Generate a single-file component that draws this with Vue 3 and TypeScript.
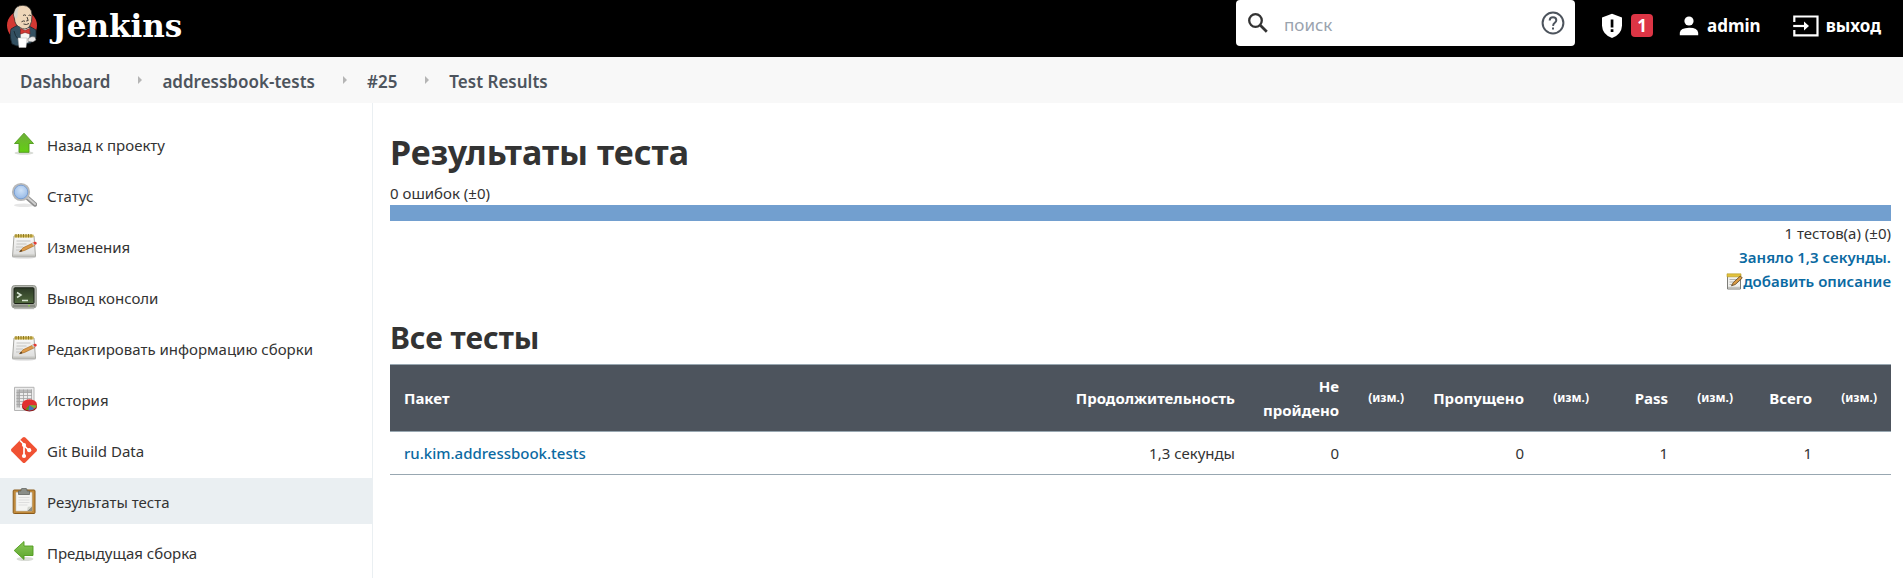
<script setup lang="ts">
type IconName = 'up' | 'search' | 'notepad' | 'terminal' | 'graph' | 'git' | 'clipboard' | 'back'

interface Task {
  icon: IconName
  label: string
  active?: boolean
}

interface PackageRow {
  name: string
  duration: string
  failed: number
  skipped: number
  passed: number
  total: number
}

const crumbs: string[] = ['Dashboard', 'addressbook-tests', '#25', 'Test Results']

const tasks: Task[] = [
  { icon: 'up', label: 'Назад к проекту' },
  { icon: 'search', label: 'Статус' },
  { icon: 'notepad', label: 'Изменения' },
  { icon: 'terminal', label: 'Вывод консоли' },
  { icon: 'notepad', label: 'Редактировать информацию сборки' },
  { icon: 'graph', label: 'История' },
  { icon: 'git', label: 'Git Build Data' },
  { icon: 'clipboard', label: 'Результаты теста', active: true },
  { icon: 'back', label: 'Предыдущая сборка' },
]

const rows: PackageRow[] = [
  { name: 'ru.kim.addressbook.tests', duration: '1,3 секунды', failed: 0, skipped: 0, passed: 1, total: 1 },
]
</script>

<template>
  <div class="page">
    <svg class="defs" width="0" height="0" aria-hidden="true">
      <defs>
        <linearGradient id="green" x1="0" y1="0" x2="0" y2="1">
          <stop offset="0" stop-color="#6fae3a" />
          <stop offset="1" stop-color="#63cf12" />
        </linearGradient>
        <linearGradient id="leaf" x1="0" y1="0" x2="0" y2="1">
          <stop offset="0" stop-color="#8cc95a" />
          <stop offset="1" stop-color="#5ba52c" />
        </linearGradient>
        <linearGradient id="paper" x1="0" y1="0" x2="0" y2="1">
          <stop offset="0" stop-color="#fafafa" />
          <stop offset="1" stop-color="#dcdcda" />
        </linearGradient>
        <linearGradient id="screen" x1="0" y1="0" x2="0" y2="1">
          <stop offset="0" stop-color="#2c3a26" />
          <stop offset="1" stop-color="#50693d" />
        </linearGradient>
        <radialGradient id="lens" cx="0.5" cy="0.4" r="0.6">
          <stop offset="0" stop-color="#cfe2f8" />
          <stop offset="1" stop-color="#8fb4e4" />
        </radialGradient>
        <symbol id="notepad" viewBox="0 0 26 26">
          <ellipse cx="13" cy="24.3" rx="12" ry="1.2" fill="#d4d4d4" />
          <path d="M3 3h20l1.500 20.500H1.500z" fill="url(#paper)" stroke="#a6a6a2" stroke-width="1" />
          <path d="M2 21.500h22v2H2z" fill="#c6c6c2" />
          <path d="M3.500 1.500h19v3h-19z" fill="#d0b751" />
          <path d="M5 1v3.500M7.500 1v3.500M10 1v3.500M12.500 1v3.500M15 1v3.500M17.500 1v3.500M20 1v3.500" stroke="#8f7a25" stroke-width="1" />
          <path d="M5.500 8h14M5.500 11h10M5 14h7M5 17h5" stroke="#c4c4c2" stroke-width="1" />
          <path d="M8.500 18.800l3.500-4L22 10l1.700 2.600-10 4.800z" fill="#dc9a4a" stroke="#a36317" stroke-width=".6" />
          <path d="M8.500 18.800l1.600-2 1.300 1.400z" fill="#3a2f20" />
          <path d="M22 9.600l1.800-.9q1.600-.2 1.900 1.200l-.1 1-1.800 1.200z" fill="#e23c35" />
          <path d="M20.800 10.300l1.300-.7 1.700 2.500-1.300.7z" fill="#c9c9c9" />
        </symbol>
        <symbol id="mini-notepad" viewBox="0 0 17 17">
          <path d="M1.500 2h13v14h-13z" fill="#f1f1ee" stroke="#7d7d78" stroke-width="1" />
          <path d="M1 .8h14v3H1z" fill="#e2c23c" stroke="#b59722" stroke-width=".6" />
          <path d="M3.500 6.500h8M3.500 9h5M3.500 11.500h3" stroke="#b5b5b2" stroke-width="1" />
          <path d="M2 14.500h12" stroke="#c2c2be" stroke-width="1.500" />
          <path d="M5.500 12.800l1.800-3.300L14.300 3l2 2-7 6.500z" fill="#d99a45" stroke="#5c4420" stroke-width=".8" />
        </symbol>
      </defs>
    </svg>

    <header class="top">
      <a class="brand" href="#">
        <svg class="butler" viewBox="0 0 32 44" aria-hidden="true">
          <circle cx="16" cy="21.500" r="15" fill="#d33833" />
          <path d="M5 25q5-3 7-4l11 1 7 4v8l-4 1-1 4-14 3-5-2q-3-7-1-15z" fill="#335061" stroke="#16232c" stroke-width=".8" />
          <path d="M14 23l10 1-1 14-8 3z" fill="#f7f6f2" />
          <path d="M8.300 8Q9 1.500 17 1.300 25.500 2 26 10.500q.3 8-2.500 12-4.500 4.500-9.500 1Q8.800 21 8.500 15 6.500 10 8.300 8z" fill="#efd6b9" stroke="#302d2a" stroke-width=".8" />
          <path d="M8.500 7.500q2-4 4.500-4.500-2 4-1.300 7 .2 3-1.400 5-3-4-1.800-7.500z" fill="#d7d4cc" />
          <path d="M17 11.500q1.500-1.300 3 0M22.500 11.500q1.500-1 2.500.2M21 13l1.200 3.500-2 .5M17.500 20q3 1.300 5.500-.5M15.500 17.800q2-1.500 3.500-.5" fill="none" stroke="#302d2a" stroke-width=".9" />
          <path d="M5 26q4-3 8-4l2 4-1 9H6q-2-4-1-9z" fill="#335061" />
          <path d="M23.500 23l5.500 3v7l-5 1z" fill="#335061" />
          <path d="M14.500 24.500l4.500 2 4.500-2 .5 5.500-5-1.500-4.500 1.500z" fill="#d33833" stroke="#7b1b19" stroke-width=".6" />
          <path d="M8 27q1 5 4 8" fill="none" stroke="#16232c" stroke-width=".8" />
          <path d="M12 34h9l-1 9.500h-7z" fill="#fff" stroke="#b7b7b7" stroke-width=".5" />
          <path d="M22 34.500q4-3 7-1.500l1 3-3 2-5-.5z" fill="#e8e8e8" stroke="#555" stroke-width=".5" />
        </svg>
        <span class="wordmark">Jenkins</span>
      </a>

      <form class="search" role="search" @submit.prevent>
        <label class="lens" for="search-box" aria-label="поиск">
          <svg viewBox="0 0 20 20" aria-hidden="true">
            <circle cx="7.500" cy="7.500" r="6.300" fill="none" stroke="#333" stroke-width="2.300" />
            <path d="M12.300 12.300l6.500 6.500" stroke="#333" stroke-width="2.700" />
          </svg>
        </label>
        <input id="search-box" type="text" placeholder="поиск" />
        <a class="help" href="#" aria-label="?">
          <svg viewBox="0 0 24 24" aria-hidden="true">
            <circle cx="12" cy="12" r="10.400" fill="none" stroke="#4d545d" stroke-width="2" />
            <path d="M8.700 9.600q0-3.300 3.300-3.300t3.300 3q0 1.400-1.500 2.500T12 14.800" fill="none" stroke="#4d545d" stroke-width="2" />
            <path d="M11 16.500h2v2h-2z" fill="#4d545d" />
          </svg>
        </a>
      </form>

      <a class="alerts" href="#">
        <svg class="shield" viewBox="0 0 22 26" aria-hidden="true">
          <path d="M11 .8l10 3.700v8.200Q20.500 21.500 11 25 1.500 21.500 1 12.700V4.500z" fill="#fff" />
          <path d="M9.700 6.500h2.700v8H9.700zM9.700 16.300h2.700V19H9.700z" fill="#000" />
        </svg>
        <span class="badge">1</span>
      </a>
      <a class="user" href="#">
        <svg class="person" viewBox="0 0 20 20" aria-hidden="true">
          <circle cx="10" cy="5" r="4.600" fill="#fff" />
          <path d="M.8 19.200v-2.500Q1.500 12 10 11.800t9.200 4.900v2.500z" fill="#fff" />
        </svg>
        <span>admin</span>
      </a>
      <a class="logout" href="#">
        <svg class="door" viewBox="0 0 26 22" aria-hidden="true">
          <path d="M1.300 7V1.500h23.200v18.800H1.300V15" fill="none" stroke="#fff" stroke-width="2.200" />
          <path d="M.2 11h13.500" stroke="#fff" stroke-width="2.200" />
          <path d="M11 6.500l5 4.500-5 4.500" fill="#fff" />
        </svg>
        <span>выход</span>
      </a>
    </header>

    <nav class="crumbs">
      <template v-for="(crumb, i) in crumbs" :key="crumb">
        <svg v-if="i > 0" class="sep" viewBox="0 0 4 8" aria-hidden="true"><path d="M0 0l4 4-4 4z" fill="#b5b5b5" /></svg>
        <a href="#">{{ crumb }}</a>
      </template>
    </nav>

    <div class="body">
      <nav class="tasks">
        <a v-for="task in tasks" :key="task.label" class="task" :class="{ active: task.active }" href="#">
          <svg v-if="task.icon === 'up'" class="icon" viewBox="0 0 26 26" aria-hidden="true">
            <ellipse cx="13" cy="22" rx="9.500" ry="1.800" fill="#d9dcd6" />
            <path d="M13 2.200L22.500 12.500H18V21.300H8V12.500H3.500z" fill="url(#green)" stroke="#4f9a1c" stroke-width=".9" />
          </svg>
          <svg v-else-if="task.icon === 'search'" class="icon" viewBox="0 0 26 26" aria-hidden="true">
            <ellipse cx="13" cy="23.300" rx="10" ry="1.800" fill="#e6e6e6" />
            <path d="M16 15.500l8 7" stroke="#8f8f8f" stroke-width="4.400" stroke-linecap="round" />
            <path d="M16.500 15.500l7.500 6.500" stroke="#cfcfcf" stroke-width="2" stroke-linecap="round" />
            <circle cx="10" cy="10" r="8" fill="url(#lens)" stroke="#b9b9b9" stroke-width="2.200" />
            <circle cx="10" cy="10" r="6.800" fill="none" stroke="#6f97cf" stroke-width=".8" />
          </svg>
          <svg v-else-if="task.icon === 'notepad'" class="icon" aria-hidden="true"><use href="#notepad" /></svg>
          <svg v-else-if="task.icon === 'terminal'" class="icon" viewBox="0 0 26 26" aria-hidden="true">
            <path d="M3 24h20v1.300H3z" fill="#d8d8d8" />
            <rect x=".8" y="1.500" width="24.500" height="22.500" rx="2.800" fill="#b5b8b0" stroke="#8d9088" stroke-width=".9" />
            <path d="M2 20.500h22v2.500H2z" fill="#8a8d84" />
            <rect x="3" y="3.800" width="20" height="15.700" rx="1" fill="url(#screen)" stroke="#1b2117" stroke-width="1" />
            <path d="M6 8.500l4 2.500-4 2.500M11 16.500h6" fill="none" stroke="#d8e6d4" stroke-width="1.500" />
            <circle cx="18" cy="21.800" r=".8" fill="#8ae234" />
          </svg>
          <svg v-else-if="task.icon === 'graph'" class="icon" viewBox="0 0 26 26" aria-hidden="true">
            <path d="M3.500 1.300h19.500v23.200H3.500z" fill="#ededed" stroke="#b4b4b4" stroke-width="1" />
            <path d="M5.500 3.500h15.500v3H5.500zM5.500 3.500h3v18h-3z" fill="#b9b9b9" />
            <path d="M5.500 6.500h15.500M5.500 9.500h15.500M5.500 12.500h15.500M5.500 15.500h15.500M5.500 18.500h15.500M8.500 3.500v18M12.500 3.500v18M16.500 3.500v18M20.500 3.500v18" stroke="#a2a2a2" stroke-width=".8" />
            <ellipse cx="18.500" cy="20.500" rx="7.500" ry="5" fill="#8e1616" />
            <ellipse cx="18.500" cy="18.800" rx="7.500" ry="5.600" fill="#e13030" />
            <path d="M18.500 19l-1 5.300q-2-.4-2.900-1z" fill="#4e9a1a" />
            <path d="M18.500 19l-1 5.400q3.500.2 6-1.700z" fill="#3f78bf" />
            <path d="M18.500 19l5 3.500q2-1.500 2.300-3z" fill="#73b93a" />
          </svg>
          <svg v-else-if="task.icon === 'git'" class="icon" viewBox="0 0 26 26" aria-hidden="true">
            <path d="M11.700.6q1.300-1.200 2.600 0l11.200 11.200q1 1.200 0 2.400L14.300 25.400q-1.300 1.200-2.600 0L.5 14.200q-1-1.200 0-2.400z" fill="#f05133" />
            <path d="M9 3.500l4 4v12.500M13 8.500l5 5" fill="none" stroke="#fff" stroke-width="1.700" />
            <circle cx="13" cy="8" r="2.100" fill="#fff" />
            <circle cx="13" cy="19" r="2.100" fill="#fff" />
            <circle cx="18.200" cy="13.200" r="2.100" fill="#fff" />
          </svg>
          <svg v-else-if="task.icon === 'clipboard'" class="icon" viewBox="0 0 26 26" aria-hidden="true">
            <rect x="2.200" y="2" width="21.800" height="23.500" rx="1" fill="#c18a3c" stroke="#8a5a1a" stroke-width="1" />
            <path d="M5 4.500h16v18.500H5z" fill="#f4f4f2" stroke="#c9c9c5" stroke-width=".6" />
            <path d="M7.500 9.500h11M7.500 12h11M7.500 14.500h11M7.500 17h9" stroke="#dedede" stroke-width="1" />
            <path d="M21 18.500V23h-5z" fill="#8d8f88" />
            <path d="M16 23l.8-4.300 4.200-.2z" fill="#d4d6d0" />
            <path d="M7.500 3h2.500V1.200Q10.500.3 13 .3t3 .9V3h2.500v3.500h-11z" fill="#8b8e88" stroke="#62655f" stroke-width=".8" />
          </svg>
          <svg v-else class="icon" viewBox="0 0 26 26" aria-hidden="true">
            <ellipse cx="14" cy="20" rx="8.500" ry="2" fill="#d9dcd6" />
            <path d="M3.200 11.500L13 2.500V7h9v9.500h-9V20.500z" fill="url(#leaf)" stroke="#4f9a1c" stroke-width=".9" />
          </svg>
          <span class="label">{{ task.label }}</span>
        </a>
      </nav>

      <main class="main">
        <h1>Результаты теста</h1>
        <div class="failures">0 ошибок (±0)</div>
        <div class="bar"></div>
        <div class="summary">
          <span>1 тестов(а) (±0)</span>
          <a href="#">Заняло 1,3 секунды.</a>
          <a class="describe" href="#">
            <svg class="mini" aria-hidden="true"><use href="#mini-notepad" /></svg>
            <span>добавить описание</span>
          </a>
        </div>

        <h2>Все тесты</h2>
        <table class="results">
          <colgroup>
            <col />
            <col class="c-duration" />
            <col class="c-failed" />
            <col class="c-diff" />
            <col class="c-skipped" />
            <col class="c-diff" />
            <col class="c-count" />
            <col class="c-diff" />
            <col class="c-count" />
            <col class="c-diff" />
          </colgroup>
          <thead>
            <tr>
              <th class="left" scope="col">Пакет</th>
              <th scope="col">Продолжительность</th>
              <th scope="col">Не пройдено</th>
              <th class="diff" scope="col">(изм.)</th>
              <th scope="col">Пропущено</th>
              <th class="diff" scope="col">(изм.)</th>
              <th scope="col">Pass</th>
              <th class="diff" scope="col">(изм.)</th>
              <th scope="col">Всего</th>
              <th class="diff" scope="col">(изм.)</th>
            </tr>
          </thead>
          <tbody>
            <tr v-for="row in rows" :key="row.name">
              <td class="left"><a href="#">{{ row.name }}</a></td>
              <td>{{ row.duration }}</td>
              <td>{{ row.failed }}</td>
              <td></td>
              <td>{{ row.skipped }}</td>
              <td></td>
              <td>{{ row.passed }}</td>
              <td></td>
              <td>{{ row.total }}</td>
              <td></td>
            </tr>
          </tbody>
        </table>
      </main>
    </div>
  </div>
</template>

<style>
body {
  margin: 0;
  background: #fff;
}
</style>

<style scoped>
.page {
  display: flex;
  flex-direction: column;
  min-height: 100vh;
  font-family: "Noto Sans", "Open Sans", sans-serif;
  font-size: 15px;
  line-height: 24px;
  color: #333;
}

.page * {
  box-sizing: border-box;
}

.defs {
  position: absolute;
}

a {
  color: #0b6aa2;
  text-decoration: none;
  font-weight: 600;
}

.top {
  display: flex;
  align-items: center;
  height: 57px;
  padding: 0 22px 6px 6px;
  background: #000;
}

.top a {
  display: flex;
  align-items: center;
  color: #fff;
  font-size: 17px;
  font-weight: 700;
}

.brand {
  margin-right: auto;
}

.butler {
  width: 32px;
  height: 44px;
}

.top .wordmark {
  margin-left: 14px;
  font-family: "DejaVu Serif", serif;
  font-size: 31px;
  font-weight: 700;
}

.search {
  display: flex;
  align-items: center;
  align-self: flex-start;
  width: 339px;
  height: 46px;
  padding: 0 10px 0 12px;
  margin-right: 26px;
  border-radius: 4px;
  background: #fff;
}

.lens svg {
  display: block;
  width: 20px;
  height: 20px;
}

.search input {
  flex: 1;
  min-width: 0;
  height: 46px;
  padding: 2px 0 0;
  margin-left: 16px;
  border: 0;
  outline: 0;
  background: transparent;
  font: inherit;
  font-size: 17px;
  color: #333;
}

.search input::placeholder {
  color: #9aa3ae;
  opacity: 1;
}

.help svg {
  width: 24px;
  height: 24px;
}

.shield {
  width: 22px;
  height: 26px;
}

.badge {
  width: 22px;
  height: 23px;
  margin-left: 8px;
  border-radius: 4px;
  background: #dc3545;
  line-height: 23px;
  text-align: center;
}

.user {
  margin-left: 26px;
}

.person {
  width: 20px;
  height: 20px;
  margin-right: 8px;
}

.logout {
  margin-left: 32px;
}

.door {
  width: 26px;
  height: 22px;
  margin-right: 7px;
}

.crumbs {
  display: flex;
  align-items: center;
  height: 46px;
  padding: 3px 20px 0;
  background: #f8f8f8;
}

.crumbs a {
  color: #4d545d;
  font-size: 17px;
}

.sep {
  width: 4px;
  height: 8px;
  margin: 0 20px 4px 28px;
}

.body {
  display: flex;
  flex: 1;
}

.tasks {
  display: flex;
  flex-direction: column;
  flex: 0 0 373px;
  gap: 5px;
  padding-top: 18px;
  border-right: 1px solid #eaeff2;
}

.task {
  display: flex;
  align-items: center;
  gap: 10px;
  height: 46px;
  padding: 0 11px;
  color: #333;
  font-weight: 400;
}

.task.active {
  background: #eaeff2;
}

.label {
  padding-top: 2px;
}

.icon {
  width: 26px;
  height: 26px;
}

.main {
  flex: 1;
  min-width: 0;
  padding: 26px 12px 0 17px;
}

h1 {
  margin: 0;
  font-size: 34px;
  line-height: 46px;
}

.failures {
  margin-top: 6px;
}

.bar {
  height: 16px;
  background: #729fcf;
}

.summary {
  display: flex;
  flex-direction: column;
  align-items: flex-end;
}

.describe {
  display: flex;
  align-items: center;
}

.mini {
  width: 17px;
  height: 17px;
}

h2 {
  margin: 25px 0 6px;
  font-size: 30px;
  line-height: 40px;
}

.results {
  width: 100%;
  table-layout: fixed;
  border-collapse: collapse;
}

.c-duration {
  width: 190px;
}

.c-failed {
  width: 104px;
}

.c-diff {
  width: 65px;
}

.c-skipped {
  width: 120px;
}

.c-count {
  width: 79px;
}

th,
td {
  padding: 9px 14px;
  text-align: right;
  border-top: 1px solid #98a7b1;
  border-bottom: 1px solid #98a7b1;
}

th {
  background: #4d545d;
  color: #fff;
  font-weight: 700;
}

td a {
  font-weight: 500;
}

.left {
  text-align: left;
}

.diff {
  padding-left: 0;
  font-size: 12px;
}
</style>
